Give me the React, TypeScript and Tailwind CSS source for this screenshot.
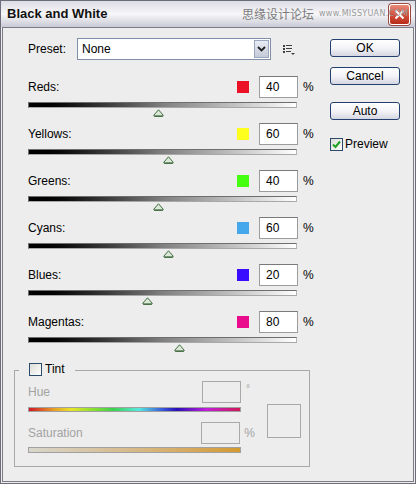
import React from "react";

type Channel = { name: string; color: string; value: number };

const channels: Channel[] = [
  { name: "Reds:", color: "bg-[#ec1026]", value: 40 },
  { name: "Yellows:", color: "bg-[#ffff1e]", value: 60 },
  { name: "Greens:", color: "bg-[#44ff10]", value: 40 },
  { name: "Cyans:", color: "bg-[#46a8ec]", value: 60 },
  { name: "Blues:", color: "bg-[#3a0cff]", value: 20 },
  { name: "Magentas:", color: "bg-[#ea0a8c]", value: 80 },
];

// slider runs from -200 to 300
const BAR_W = 269;

function Thumb({ value }: { value: number }) {
  const left = ((value + 200) / 500) * BAR_W - 5.5;
  return (
    <svg
      className="absolute top-[6px]"
      style={{ left }}
      width="11"
      height="8"
      viewBox="0 0 11 8"
    >
      <path
        d="M5.5 0.8 L10.2 6.2 Q10.4 7.2 9.4 7.2 L1.6 7.2 Q0.6 7.2 0.8 6.2 Z"
        fill="#dce9d8"
        stroke="#3f6d3f"
        strokeWidth="1"
      />
      <line x1="1.2" y1="7.1" x2="9.8" y2="7.1" stroke="#2f5a2f" strokeWidth="1" />
    </svg>
  );
}

function ChannelRow({ c }: { c: Channel }) {
  return (
    <div className="h-[47px] pl-[14px]">
      <div className="flex h-[22px] w-[285px] items-center">
        <span className="flex-1">{c.name}</span>
        <span className={`h-[12px] w-[12px] ${c.color}`} />
        <div className="ml-[10px] flex h-[22px] w-[39px] items-center border border-[#9c9c9c] border-t-[#7a7a7a] bg-white pl-[6px]">
          {c.value}
        </div>
        <span className="ml-[5px] w-[10px]">%</span>
      </div>
      <div className="relative mt-[4px] h-[6px] w-[269px] border border-[#6e6e6e] border-r-[#b4b4b4] border-b-[#a8a8a8] bg-gradient-to-r from-black via-[#808080] to-white">
        <Thumb value={c.value} />
      </div>
    </div>
  );
}

function Button({ label }: { label: string }) {
  return (
    <div className="flex h-[18px] w-[70px] items-center justify-center rounded-[3px] border border-[#24406e] bg-gradient-to-b from-white via-[#f4f4f8] to-[#d6d6e2] text-[12px]">
      {label}
    </div>
  );
}

function MenuIcon() {
  return (
    <svg width="13" height="11" viewBox="0 0 13 11">
      <g fill="#404040">
        <rect x="0" y="0" width="2" height="2" />
        <rect x="3" y="0" width="6" height="1" />
        <rect x="0" y="3" width="2" height="2" />
        <rect x="3" y="3" width="6" height="1" />
        <rect x="0" y="6" width="2" height="2" />
        <rect x="3" y="6" width="5" height="1" />
        <path d="M8 8 L12 8 L10 10 Z" />
      </g>
    </svg>
  );
}

export default function App() {
  return (
    <div className="h-[484px] w-[416px] bg-[#ededed] font-['Liberation_Sans',Arial,sans-serif] text-[12px] text-black">
      <div className="flex h-full flex-col border border-[#6c6c7a]">
        {/* title bar */}
        <div className="relative flex h-[26px] items-center bg-gradient-to-b from-[#dcdce4] via-[#f7f7f9] to-[#cacad6] pl-[6px] pr-[5px]">
          <span className="flex-1 text-[13px] font-bold text-[#111]">Black and White</span>
          <div className="flex h-[21px] w-[21px] items-center justify-center rounded-[3px] border border-white bg-gradient-to-b from-[#e88a7a] via-[#d4503c] to-[#b82c1c] shadow-[0_0_0_1px_#9a4a40]">
            <svg width="11" height="11" viewBox="0 0 11 11">
              <path d="M1.5 1.5 L9.5 9.5 M9.5 1.5 L1.5 9.5" stroke="white" strokeWidth="2" />
            </svg>
          </div>
          {/* watermark */}
          <div className="absolute left-[241px] top-[6px] z-10 flex items-center gap-[5px] whitespace-nowrap text-[#7c7c7c]">
            <span className="font-['Noto_Sans_CJK_SC',sans-serif] text-[12px] leading-[14px]">思缘设计论坛</span>
            <span className="font-['DejaVu_Sans',sans-serif] text-[8px] tracking-[0.3px] text-[#9a9a9a]">www.MISSYUAN.COM</span>
          </div>
        </div>

        {/* body */}
        <div className="mx-px mb-px flex flex-1 border border-[#7c7c88] pl-[11px]">
          {/* left column */}
          <div className="w-[296px] pt-[10px]">
            <div className="flex h-[22px] items-center pl-[14px]">
              <span className="w-[49px]">Preset:</span>
              <div className="flex h-[22px] w-[194px] items-center border border-[#7f8fa8] bg-white pl-[4px]">
                <span className="flex-1">None</span>
                <div className="mr-px flex h-[18px] w-[15px] items-center justify-center border border-[#9aa6bc] bg-gradient-to-b from-[#e8ecf4] to-[#c4cad8]">
                  <svg width="9" height="6" viewBox="0 0 9 6">
                    <path d="M1 1 L4.5 4.5 L8 1" fill="none" stroke="#202020" strokeWidth="1.8" />
                  </svg>
                </div>
              </div>
              <span className="ml-[12px] mt-[2px] flex">
                <MenuIcon />
              </span>
            </div>

            <div className="mt-[16px]">
              {channels.map((c) => (
                <ChannelRow key={c.name} c={c} />
              ))}
            </div>

            <fieldset className="mt-[2px] h-[107px] border border-[#a8a8a8] pb-[6px]">
              <legend className="ml-[4px] px-[10px]">
                <span className="inline-flex items-center gap-[3px]">
                  <span className="h-[13px] w-[13px] border border-[#2c4a6a] bg-gradient-to-br from-[#dcdcd8] to-white" />
                  <span>Tint</span>
                </span>
              </legend>
              <div className="flex pl-[13px] text-[#a3a3a3]">
                <div className="w-[227px]">
                  <div className="flex h-[22px] items-center">
                    <span className="w-[174px]">Hue</span>
                    <div className="h-[22px] w-[39px] border border-[#a9a9a9]" />
                    <span className="ml-[5px] -mt-[6px] text-[10px]">°</span>
                  </div>
                  <div className="mt-[4px] h-[5px] w-[213px] border border-[#a0a0a0] bg-[linear-gradient(to_right,#d01828_0%,#e8a028_12%,#e8e428_20%,#8ee030_30%,#3cd050_40%,#58e8e0_52%,#3850d8_64%,#2a10b8_70%,#c020d8_84%,#d01858_100%)]" />
                  <div className="mt-[10px] flex h-[22px] items-center">
                    <span className="w-[174px]">Saturation</span>
                    <div className="h-[22px] w-[39px] border border-[#a9a9a9]" />
                    <span className="ml-[4px]">%</span>
                  </div>
                  <div className="mt-[3px] h-[6px] w-[213px] border border-[#a0a0a0] bg-gradient-to-r from-[#d8d6cc] to-[#d49a2c]" />
                </div>
                <div className="ml-[12px] mt-[23px] h-[34px] w-[34px] border border-[#a9a9a9]" />
              </div>
            </fieldset>
          </div>

          {/* right column */}
          <div className="ml-[20px] flex flex-col pt-[11px]">
            <Button label="OK" />
            <div className="mt-[10px]">
              <Button label="Cancel" />
            </div>
            <div className="mt-[17px]">
              <Button label="Auto" />
            </div>
            <div className="mt-[15px] flex items-center gap-[2px]">
              <span className="flex h-[13px] w-[13px] items-center justify-center border border-[#2c4a6a] bg-gradient-to-br from-[#dcdcd8] to-white">
                <svg width="9" height="9" viewBox="0 0 9 9">
                  <path d="M1 4.5 L3.5 7 L8 1.5" fill="none" stroke="#21a121" strokeWidth="2" />
                </svg>
              </span>
              <span>Preview</span>
            </div>
          </div>
        </div>
      </div>
    </div>
  );
}
